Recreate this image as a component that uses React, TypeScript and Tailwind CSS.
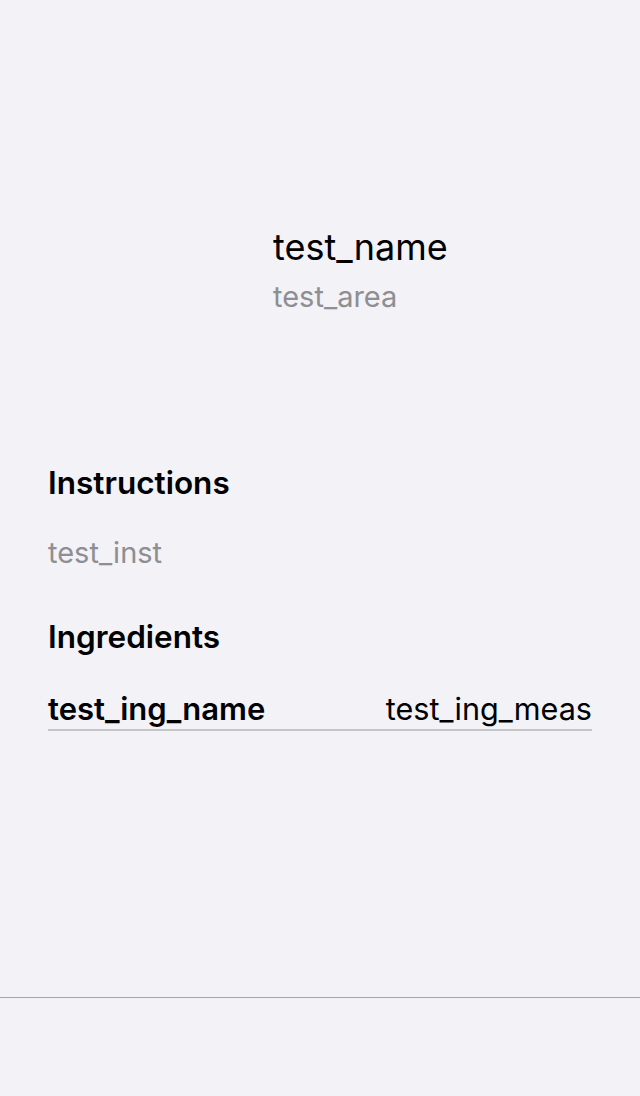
export default function App() {
  return (
    <div className="flex h-[1096px] w-[640px] flex-col bg-[#f2f2f7] font-['Inter',sans-serif] text-black">
      <div className="flex-1 px-12">
        {/* header: thumbnail placeholder + titles */}
        <div className="mt-[195px] flex h-[150px] items-center gap-6">
          <div className="h-[150px] w-[201px] shrink-0" />
          <div className="flex flex-col">
            <span className="text-[36px] leading-[44px]">test_name</span>
            <span className="mt-[10px] text-[29px] leading-[36px] text-[#8e8e93]">test_area</span>
          </div>
        </div>

        <h2 className="mt-[120px] text-[31.5px] font-semibold leading-[36px]">Instructions</h2>
        <p className="mt-[34px] text-[29px] leading-[36px] text-[#8e8e93]">test_inst</p>

        <h2 className="mt-[48px] text-[31.5px] font-semibold leading-[36px]">Ingredients</h2>
        <div className="mt-[36px] flex items-center justify-between border-b-2 border-[#c6c6c8] pb-[2px] leading-[36px]">
          <span className="text-[31px] font-semibold">test_ing_name</span>
          <span className="text-[30.6px]">test_ing_meas</span>
        </div>
      </div>

      {/* tab bar */}
      <div className="h-[99px] border-t border-[#a5a5aa]" />
    </div>
  );
}
